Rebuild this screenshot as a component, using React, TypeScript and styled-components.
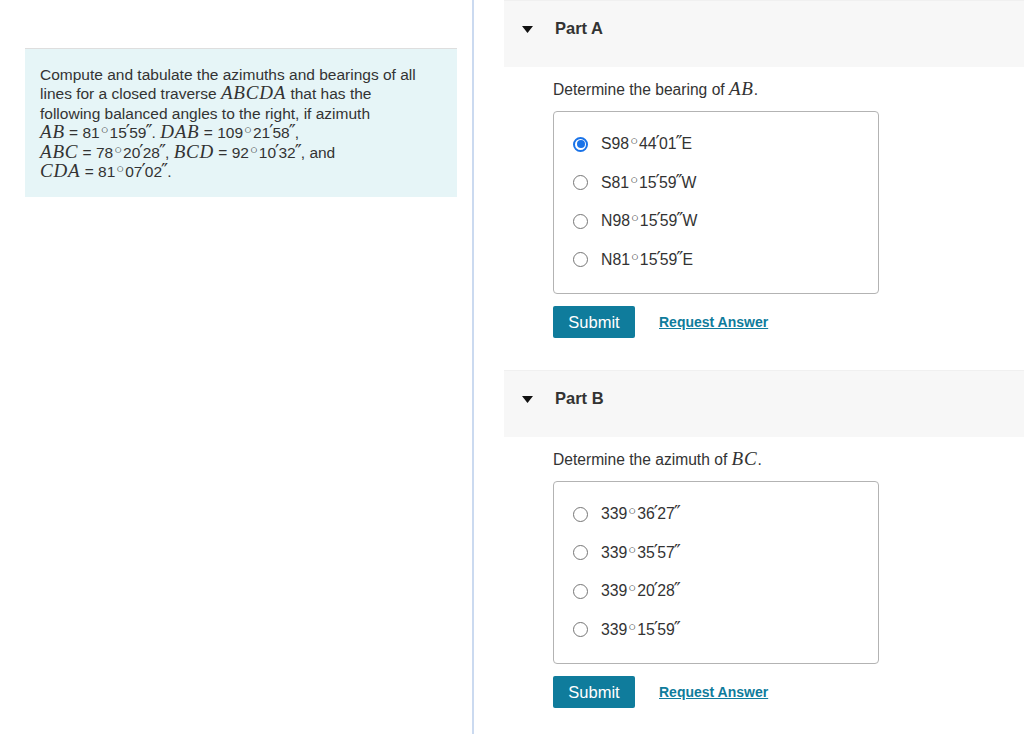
import React, { useState } from 'react';
import styled, { createGlobalStyle } from 'styled-components';

const GlobalStyle = createGlobalStyle`
  body {
    margin: 0;
    font-family: "Liberation Sans", Arial, sans-serif;
    color: #333;
    background: #fff;
  }
`;

const Page = styled.div`
  display: flex;
  height: 734px;
  overflow: hidden;
`;

const LeftPane = styled.div`
  width: 474px;
  flex-shrink: 0;
  box-sizing: border-box;
  padding: 48px 15px 0 25px;
  border-right: 2px solid #cbdaf0;
`;

const ProblemBox = styled.div`
  background: #e6f5f7;
  border-top: 1px solid #dedede;
  padding: 16px 10px 16px 15px;
  font-size: 15.5px;
  line-height: 19.4px;
  color: #333;
`;

const M = styled.span`
  font-family: "Liberation Serif", "Times New Roman", serif;
  font-style: italic;
  font-size: 19px;
  letter-spacing: 0.8px;
  line-height: 0;
`;

const Deg = styled.span`
  font-size: 13px;
  vertical-align: 4px;
  margin: 0 1px 0 1px;
  line-height: 0;
`;

const Pr = styled.span`
  font-family: "DejaVu Sans", sans-serif;
  font-size: 19px;
  line-height: 0;
  margin: 0 -1px;
`;

const RightPane = styled.div`
  flex: 1;
  padding-left: 30px;
`;

const Part = styled.section`
  margin-bottom: 32px;
`;

const PartHeader = styled.div`
  display: flex;
  align-items: flex-start;
  background: #f7f7f7;
  height: 67px;
  box-sizing: border-box;
  padding: 18px 0 0 18px;
  border-top: 1px solid #f0f0f0;
`;

const Caret = styled.svg`
  width: 11px;
  height: 7px;
  margin-top: 7px;
`;

const PartTitle = styled.h2`
  margin: 0 0 0 22px;
  font-size: 16.5px;
  font-weight: bold;
  color: #333;
  line-height: 19px;
`;

const PartBody = styled.div`
  padding-left: 49px;
`;

const Prompt = styled.p`
  margin: 13px 0 12px;
  font-size: 15.6px;
  line-height: 19px;
  color: #333;
`;

const OptionBox = styled.div`
  width: 326px;
  box-sizing: border-box;
  border: 1px solid #b3b3b3;
  border-radius: 4px;
  padding: 13px 0 14px 19px;
`;

const OptionRow = styled.label`
  display: flex;
  align-items: center;
  height: 38.5px;
  font-size: 15.8px;
  color: #333;
  cursor: pointer;
`;

const Radio = styled.span<{ $on: boolean }>`
  width: 15px;
  height: 15px;
  box-sizing: border-box;
  border-radius: 50%;
  border: ${(p) => (p.$on ? '2px solid #1a73e8' : '1px solid #767676')};
  display: flex;
  align-items: center;
  justify-content: center;
  margin-right: 13px;
  flex-shrink: 0;
  &::after {
    content: '';
    display: ${(p) => (p.$on ? 'block' : 'none')};
    width: 8px;
    height: 8px;
    border-radius: 50%;
    background: #1a73e8;
  }
`;

const Actions = styled.div`
  display: flex;
  align-items: center;
  margin-top: 12px;
  gap: 24px;
`;

const SubmitButton = styled.button`
  width: 82px;
  height: 32px;
  border: none;
  border-radius: 2px;
  background: #0f7c9c;
  color: #fff;
  font-family: "Liberation Sans", Arial, sans-serif;
  font-size: 16.5px;
  padding: 0;
`;

const RequestLink = styled.a`
  font-size: 14px;
  font-weight: bold;
  color: #0f7c9c;
  text-decoration: underline;
`;

type Angle = { pre?: string; d: string; m: string; s: string; post?: string };

const AngleText = ({ a }: { a: Angle }) => (
  <span>
    {a.pre}
    {a.d}
    <Deg>○</Deg>
    {a.m}
    <Pr>′</Pr>
    {a.s}
    <Pr>″</Pr>
    {a.post}
  </span>
);

const partA: Angle[] = [
  { pre: 'S', d: '98', m: '44', s: '01', post: 'E' },
  { pre: 'S', d: '81', m: '15', s: '59', post: 'W' },
  { pre: 'N', d: '98', m: '15', s: '59', post: 'W' },
  { pre: 'N', d: '81', m: '15', s: '59', post: 'E' },
];

const partB: Angle[] = [
  { d: '339', m: '36', s: '27' },
  { d: '339', m: '35', s: '57' },
  { d: '339', m: '20', s: '28' },
  { d: '339', m: '15', s: '59' },
];

const PartPanel = ({
  title,
  prompt,
  options,
  initial,
}: {
  title: string;
  prompt: React.ReactNode;
  options: Angle[];
  initial: number;
}) => {
  const [sel, setSel] = useState(initial);
  return (
    <Part>
      <PartHeader>
        <Caret viewBox="0 0 11 7">
          <path d="M0 0 L11 0 L5.5 7 Z" fill="#111" />
        </Caret>
        <PartTitle>{title}</PartTitle>
      </PartHeader>
      <PartBody>
        <Prompt>{prompt}</Prompt>
        <OptionBox>
          {options.map((o, i) => (
            <OptionRow key={i} onClick={() => setSel(i)}>
              <Radio $on={sel === i} />
              <AngleText a={o} />
            </OptionRow>
          ))}
        </OptionBox>
        <Actions>
          <SubmitButton>Submit</SubmitButton>
          <RequestLink href="#">Request Answer</RequestLink>
        </Actions>
      </PartBody>
    </Part>
  );
};

const App = () => (
  <>
    <GlobalStyle />
    <Page>
      <LeftPane>
        <ProblemBox>
          Compute and tabulate the azimuths and bearings of all
          <br />
          lines for a closed traverse <M>ABCDA</M> that has the
          <br />
          following balanced angles to the right, if azimuth
          <br />
          <M>AB</M> = <AngleText a={{ d: '81', m: '15', s: '59', post: '. ' }} />
          <M>DAB</M> = <AngleText a={{ d: '109', m: '21', s: '58', post: ',' }} />
          <br />
          <M>ABC</M> = <AngleText a={{ d: '78', m: '20', s: '28', post: ', ' }} />
          <M>BCD</M> = <AngleText a={{ d: '92', m: '10', s: '32', post: ', and' }} />
          <br />
          <M>CDA</M> = <AngleText a={{ d: '81', m: '07', s: '02', post: '.' }} />
        </ProblemBox>
      </LeftPane>
      <RightPane>
        <PartPanel
          title="Part A"
          prompt={
            <>
              Determine the bearing of <M>AB</M>.
            </>
          }
          options={partA}
          initial={0}
        />
        <PartPanel
          title="Part B"
          prompt={
            <>
              Determine the azimuth of <M>BC</M>.
            </>
          }
          options={partB}
          initial={-1}
        />
      </RightPane>
    </Page>
  </>
);

export default App;
